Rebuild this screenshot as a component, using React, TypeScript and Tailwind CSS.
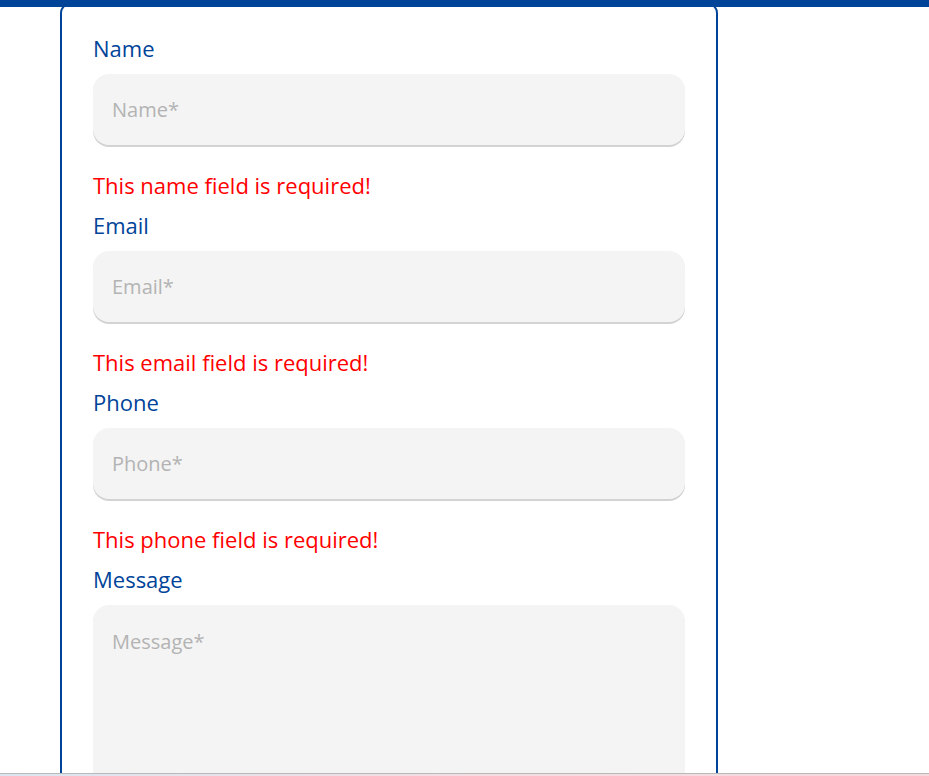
import { useState } from 'react'

const FONT = "font-['Open_Sans','Noto_Sans',sans-serif]"

const LABEL = 'block text-[22px] leading-[28px] text-[#00449a]'
const ERROR = 'mt-[26px] text-[22px] leading-[28px] text-[#ff0000]'
const FIELD =
  'mt-[12px] block w-full rounded-[16px] bg-[#f4f4f4] px-[19px] text-[20px] text-gray-700 shadow-[0_2px_0_#d3d3d3] outline-none placeholder:text-[#b3b3b3]'

type FieldDef = { id: string; label: string; error: string }

const FIELDS: FieldDef[] = [
  { id: 'name', label: 'Name', error: 'This name field is required!' },
  { id: 'email', label: 'Email', error: 'This email field is required!' },
  { id: 'phone', label: 'Phone', error: 'This phone field is required!' },
]

export default function App() {
  const [values, setValues] = useState<Record<string, string>>({})

  return (
    <div className={`flex h-[776px] flex-col overflow-hidden bg-white ${FONT}`}>
      <div className="relative z-10 h-[7px] shrink-0 bg-[#00449a]" />

      <div className="min-h-0 flex-1 overflow-hidden pl-[60px]">
        <form
          className="-mt-[4px] w-[658px] rounded-[10px] border-2 border-[#00449a] px-[31px] pt-[29px] pb-10"
          onSubmit={(e) => e.preventDefault()}
        >
          {FIELDS.map((f, i) => (
            <div key={f.id} className={i === 0 ? '' : 'mt-[12px]'}>
              <label htmlFor={f.id} className={LABEL}>
                {f.label}
              </label>
              <input
                id={f.id}
                placeholder={`${f.label}*`}
                value={values[f.id] ?? ''}
                onChange={(e) => setValues({ ...values, [f.id]: e.target.value })}
                className={`${FIELD} h-[71px]`}
              />
              <p className={ERROR}>{f.error}</p>
            </div>
          ))}

          <div className="mt-[12px]">
            <label htmlFor="message" className={LABEL}>
              Message
            </label>
            <textarea
              id="message"
              placeholder="Message*"
              className={`${FIELD} h-[220px] resize-none pt-[22px]`}
            />
          </div>
        </form>
      </div>

      <div className="h-px shrink-0 bg-[#b9b9b9]" />
      <div className="h-[2px] shrink-0 bg-gradient-to-r from-[#dbe6f0] via-[#f3dde3] to-[#f5d9df]" />
    </div>
  )
}
